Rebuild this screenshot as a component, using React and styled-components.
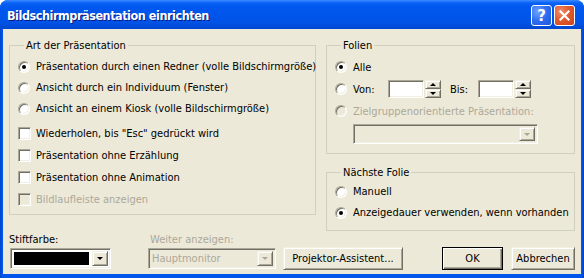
import React from 'react'
import styled, { createGlobalStyle, css } from 'styled-components'

const BG = '#ECE9D8'
const DISABLED = '#ACA899'

const GlobalStyle = createGlobalStyle`
  html, body {
    margin: 0;
    padding: 0;
    background: #fff;
  }
  body {
    font-family: 'DejaVu Sans Condensed', 'DejaVu Sans', sans-serif;
    font-size: 11px;
    color: #000;
  }
`

const Window = styled.div`
  width: 584px;
  height: 278px;
  display: flex;
  flex-direction: column;
  border-radius: 8px 8px 0 0;
  overflow: hidden;
  background: #0055EA;
`

const TitleBar = styled.div`
  height: 29px;
  flex: none;
  display: flex;
  align-items: center;
  justify-content: space-between;
  padding: 0 9px 0 7px;
  background: linear-gradient(to bottom, #3D8BFF 0%, #0A62F5 10%, #0058EE 22%, #0055EA 55%, #0152E4 80%, #0046D0 100%);
`

const Title = styled.span`
  font-family: 'DejaVu Sans Condensed', 'DejaVu Sans', sans-serif;
  font-weight: bold;
  font-size: 12.5px;
  letter-spacing: -0.45px;
  color: #fff;
  text-shadow: 1px 1px 0 #0A1883;
  padding-top: 1px;
`

const CaptionButtons = styled.div`
  display: flex;
  gap: 2px;
  padding-top: 2px;
`

const CaptionButton = styled.div`
  width: 21px;
  height: 21px;
  box-sizing: border-box;
  border: 1px solid #fff;
  border-radius: 3px;
  display: flex;
  align-items: center;
  justify-content: center;
  color: #fff;
  font-family: 'DejaVu Sans', sans-serif;
  font-weight: bold;
  font-size: 15px;
  ${p => p.$close
    ? css`background: radial-gradient(circle at 30% 30%, #F08F6C 0%, #E25A2E 45%, #C8421A 100%);`
    : css`background: radial-gradient(circle at 30% 30%, #6FA3FF 0%, #2E6DF0 50%, #1F55D8 100%);`}
`

const Frame = styled.div`
  flex: 1;
  display: flex;
  padding: 0 4px 4px 3px;
  background: linear-gradient(to right, #0043C8 0px, #0055EA 2px, #0055EA calc(100% - 2px), #0040BF 100%);
`

const Client = styled.div`
  flex: 1;
  background: ${BG};
  display: flex;
  flex-direction: column;
  padding: 10px 6px 0 6px;
`

const Top = styled.div`
  display: flex;
  gap: 10px;
`

const Column = styled.div`
  display: flex;
  flex-direction: column;
  gap: 12px;
`

const Group = styled.fieldset`
  margin: 0;
  box-sizing: border-box;
  width: ${p => p.$w}px;
  height: ${p => p.$h}px;
  padding: ${p => p.$pt}px 0 0 8px;
  border: 1px solid #D0D0BF;
  min-width: 0;
  display: flex;
  flex-direction: column;
`

const Legend = styled.legend`
  padding: 0 2px;
  margin-left: 6px;
  line-height: 13px;
`

const Row = styled.div`
  height: ${p => p.$h || 21}px;
  display: flex;
  align-items: center;
  gap: ${p => (p.$gap === undefined ? 5 : p.$gap)}px;
  color: ${p => (p.$disabled ? DISABLED : '#000')};
  white-space: nowrap;
`

const Indicator = styled.span`
  width: 13px;
  height: 13px;
  flex: none;
  display: flex;
  align-items: center;
  justify-content: center;
`

const RadioCircle = styled.span`
  width: 12px;
  height: 12px;
  box-sizing: border-box;
  border-radius: 50%;
  border: 1px solid;
  border-color: #ACA899 #fff #fff #ACA899;
  box-shadow: inset 1px 1px 0 #716F64, inset -1px -1px 0 #F1EFE2;
  background: ${p => (p.$disabled ? BG : '#fff')};
  display: flex;
  align-items: center;
  justify-content: center;
  margin-right: 1px;

  &::after {
    content: '';
    width: 4px;
    height: 4px;
    border-radius: 50%;
    background: #000;
    display: ${p => (p.$checked ? 'block' : 'none')};
  }
`

const CheckBox = styled.span`
  width: 13px;
  height: 13px;
  box-sizing: border-box;
  border: 1px solid;
  border-color: #ACA899 #fff #fff #ACA899;
  box-shadow: inset 1px 1px 0 #716F64, inset -1px -1px 0 #F1EFE2;
  background: ${p => (p.$disabled ? BG : '#fff')};
`

const Radio = ({ checked, disabled, children, h }) => (
  <Row $h={h} $disabled={disabled}>
    <Indicator><RadioCircle $checked={checked} $disabled={disabled} /></Indicator>
    {children}
  </Row>
)

const Check = ({ disabled, children }) => (
  <Row $h={22} $disabled={disabled}>
    <Indicator><CheckBox $disabled={disabled} /></Indicator>
    {children}
  </Row>
)

const Spacer = styled.div`
  height: ${p => p.$h}px;
  flex: none;
`

const sunken = css`
  box-sizing: border-box;
  border: 1px solid;
  border-color: #ACA899 #fff #fff #ACA899;
  box-shadow: inset 1px 1px 0 #716F64, inset -1px -1px 0 #F1EFE2;
`

const raised = css`
  box-sizing: border-box;
  border: 1px solid;
  border-color: #F1EFE2 #716F64 #716F64 #F1EFE2;
  box-shadow: inset 1px 1px 0 #fff, inset -1px -1px 0 #ACA899;
  background: ${BG};
`

const FieldLabel = styled.span`
  width: ${p => p.$w}px;
  margin-left: ${p => p.$ml || 0}px;
  flex: none;
`

const NumberBox = styled.div`
  ${sunken};
  width: 36px;
  height: 18px;
  background: #fff;
`

const Spin = styled.div`
  width: 16px;
  height: 18px;
  display: flex;
  flex-direction: column;
  margin-left: 1px;
`

const SpinHalf = styled.div`
  ${raised};
  flex: 1;
  display: flex;
  align-items: center;
  justify-content: center;
`

const Arrow = styled.span`
  width: 0;
  height: 0;
  border-left: ${p => p.$s || 3}px solid transparent;
  border-right: ${p => p.$s || 3}px solid transparent;
  ${p => (p.$up
    ? css`border-bottom: ${p.$s || 3}px solid ${p.$c || '#000'};`
    : css`border-top: ${p.$s || 3}px solid ${p.$c || '#000'};`)}
`

const SpinField = () => (
  <>
    <NumberBox />
    <Spin>
      <SpinHalf><Arrow $up /></SpinHalf>
      <SpinHalf><Arrow /></SpinHalf>
    </Spin>
  </>
)

const Combo = styled.div`
  ${sunken};
  width: ${p => p.$w}px;
  height: ${p => p.$h || 21}px;
  margin-left: ${p => p.$ml || 0}px;
  margin-top: ${p => p.$mt || 0}px;
  background: ${p => (p.$disabled ? BG : '#fff')};
  display: flex;
  align-items: stretch;
  padding: 2px;
  flex: none;
`

const ComboValue = styled.div`
  flex: 1;
  display: flex;
  align-items: center;
  padding-left: 1px;
  color: ${p => (p.$disabled ? DISABLED : '#000')};
`

const Swatch = styled.div`
  flex: 1;
  margin-right: 2px;
  border: 1px solid #fff;
  background: #000;
`

const DropButton = styled.div`
  ${raised};
  width: 16px;
  flex: none;
  display: flex;
  align-items: center;
  justify-content: center;
`

const Bottom = styled.div`
  display: flex;
  align-items: flex-end;
  margin-top: 2px;
`

const Field = styled.div`
  display: flex;
  flex-direction: column;
  gap: 2px;
  margin-left: ${p => p.$ml || 0}px;
  margin-bottom: 1px;
`

const Caption = styled.span`
  line-height: 13px;
  padding-left: ${p => p.$pl || 0}px;
  color: ${p => (p.$disabled ? DISABLED : '#000')};
`

const Button = styled.button`
  ${raised};
  font-family: inherit;
  font-size: 11px;
  color: #000;
  height: 23px;
  width: ${p => p.$w}px;
  margin-left: ${p => p.$ml || 0}px;
  padding: 0;
  ${p => p.$default && css`
    border: 1px solid #000;
    box-shadow: inset 1px 1px 0 #fff, inset -1px -1px 0 #716F64, inset -2px -2px 0 #ACA899;
  `}
`

const CloseIcon = () => (
  <svg width='11' height='11' viewBox='0 0 11 11'>
    <path d='M1.5 1.5 L9.5 9.5 M9.5 1.5 L1.5 9.5' stroke='#fff' strokeWidth='2.2' strokeLinecap='square' />
  </svg>
)

export default function App () {
  return (
    <>
      <GlobalStyle />
      <Window>
        <TitleBar>
          <Title>Bildschirmpräsentation einrichten</Title>
          <CaptionButtons>
            <CaptionButton>?</CaptionButton>
            <CaptionButton $close><CloseIcon /></CaptionButton>
          </CaptionButtons>
        </TitleBar>
        <Frame>
          <Client>
            <Top>
              <Group $w={307} $h={176} $pt={4}>
                <Legend>Art der Präsentation</Legend>
                <Radio checked>Präsentation durch einen Redner (volle Bildschirmgröße)</Radio>
                <Radio>Ansicht durch ein Individuum (Fenster)</Radio>
                <Radio>Ansicht an einem Kiosk (volle Bildschirmgröße)</Radio>
                <Spacer $h={3} />
                <Check>Wiederholen, bis "Esc" gedrückt wird</Check>
                <Check>Präsentation ohne Erzählung</Check>
                <Check>Präsentation ohne Animation</Check>
                <Check disabled>Bildlaufleiste anzeigen</Check>
              </Group>
              <Column>
                <Group $w={249} $h={115} $pt={4}>
                  <Legend>Folien</Legend>
                  <Radio checked h={22}>Alle</Radio>
                  <Row $h={22}>
                    <Indicator><RadioCircle /></Indicator>
                    <FieldLabel $w={30}>Von:</FieldLabel>
                    <Row $h={22} $gap={0}>
                      <SpinField />
                      <FieldLabel $w={28} $ml={9}>Bis:</FieldLabel>
                      <SpinField />
                    </Row>
                  </Row>
                  <Radio disabled h={22}>Zielgruppenorientierte Präsentation:</Radio>
                  <Combo $w={185} $h={20} $ml={18} $mt={2} $disabled>
                    <ComboValue $disabled />
                    <DropButton><Arrow $c={DISABLED} $s={3} /></DropButton>
                  </Combo>
                </Group>
                <Group $w={249} $h={65} $pt={2}>
                  <Legend>Nächste Folie</Legend>
                  <Radio>Manuell</Radio>
                  <Radio checked>Anzeigedauer verwenden, wenn vorhanden</Radio>
                </Group>
              </Column>
            </Top>
            <Bottom>
              <Field>
                <Caption>Stiftfarbe:</Caption>
                <Combo $w={101} $ml={1}>
                  <Swatch />
                  <DropButton><Arrow /></DropButton>
                </Combo>
              </Field>
              <Field $ml={37}>
                <Caption $pl={2} $disabled>Weiter anzeigen:</Caption>
                <Combo $w={128} $disabled>
                  <ComboValue $disabled>Hauptmonitor</ComboValue>
                  <DropButton><Arrow $c={DISABLED} /></DropButton>
                </Combo>
              </Field>
              <Button $w={120} $ml={7}>Projektor-Assistent...</Button>
              <Button $w={61} $ml={39} $default>OK</Button>
              <Button $w={64} $ml={8}>Abbrechen</Button>
            </Bottom>
          </Client>
        </Frame>
      </Window>
    </>
  )
}
